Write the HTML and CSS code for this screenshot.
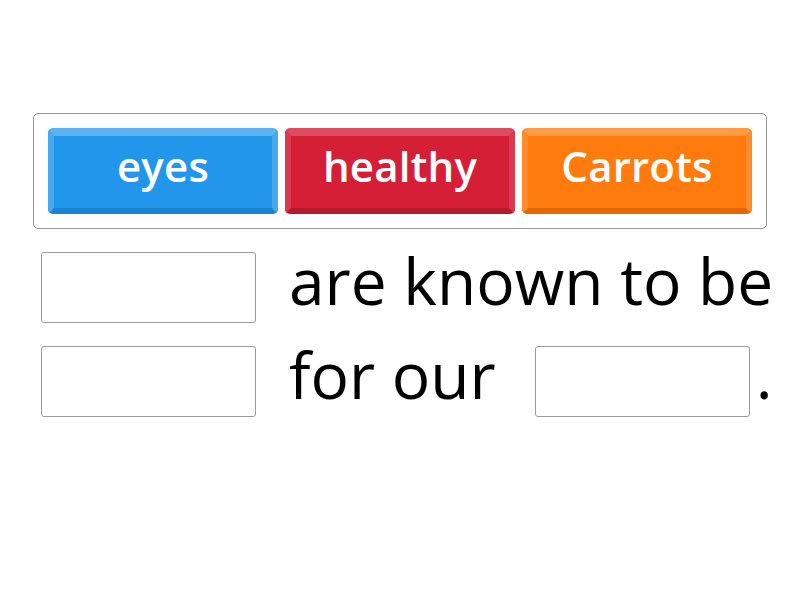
FILE: index.html
```html
<!DOCTYPE html>
<html>
<head>
<meta charset="utf-8">
<link rel="stylesheet" href="styles.css">
</head>
<body>
<div class="page">
  <div class="bank">
    <div class="tile tile-blue">eyes</div>
    <div class="tile tile-red">healthy</div>
    <div class="tile tile-orange">Carrots</div>
  </div>
  <div class="sentence">
    <div class="row">
      <div class="blank"></div>
      <span class="words">are known to be</span>
    </div>
    <div class="row">
      <div class="blank"></div>
      <span class="words">for our</span>
      <div class="blank blank-inline"></div>
      <span class="words period">.</span>
    </div>
  </div>
</div>
</body>
</html>
```

FILE: styles.css
```css
html, body {
  margin: 0;
  padding: 0;
  background: #ffffff;
}

.page {
  width: 800px;
  height: 600px;
  font-family: "Open Sans", "Noto Sans", sans-serif;
  padding-top: 113px;
  box-sizing: border-box;
}

.bank {
  width: 734px;
  margin: 0 auto;
  box-sizing: border-box;
  border: 1px solid #9a9a9a;
  border-radius: 5px;
  padding: 14px;
  display: flex;
  gap: 7px;
}

.tile {
  width: 230px;
  height: 86px;
  box-sizing: border-box;
  border-radius: 5px;
  border-style: solid;
  border-width: 8px 6px 6px 6px;
  padding-bottom: 14px;
  color: #ffffff;
  font-weight: 600;
  font-size: 42px;
  display: flex;
  align-items: center;
  justify-content: center;
  letter-spacing: 0.2px;
}

.tile-blue {
  background: #2196ea;
  border-color: #5ab4f0 #47aaee #1b84d2 #47aaee;
}

.tile-red {
  background: #d41f37;
  border-color: #e04c5f #da3a4f #b51a2f #da3a4f;
}

.tile-orange {
  background: #ff7b0d;
  border-color: #ff9b42 #ff8c2a #e26a06 #ff8c2a;
}

.sentence {
  padding: 23px 0 0 41px;
  display: flex;
  flex-direction: column;
  gap: 23px;
}

.row {
  display: flex;
  align-items: center;
  height: 71px;
}

.blank {
  width: 215px;
  height: 71px;
  box-sizing: border-box;
  border: 1px solid #9a9a9a;
  border-radius: 3px;
  flex: none;
}

.words {
  font-size: 64px;
  line-height: 57px;
  color: #000000;
  margin-left: 33px;
  margin-bottom: 14px;
  white-space: nowrap;
}

.blank-inline {
  margin-left: 39px;
}

.period {
  margin-left: 6px;
}
```
